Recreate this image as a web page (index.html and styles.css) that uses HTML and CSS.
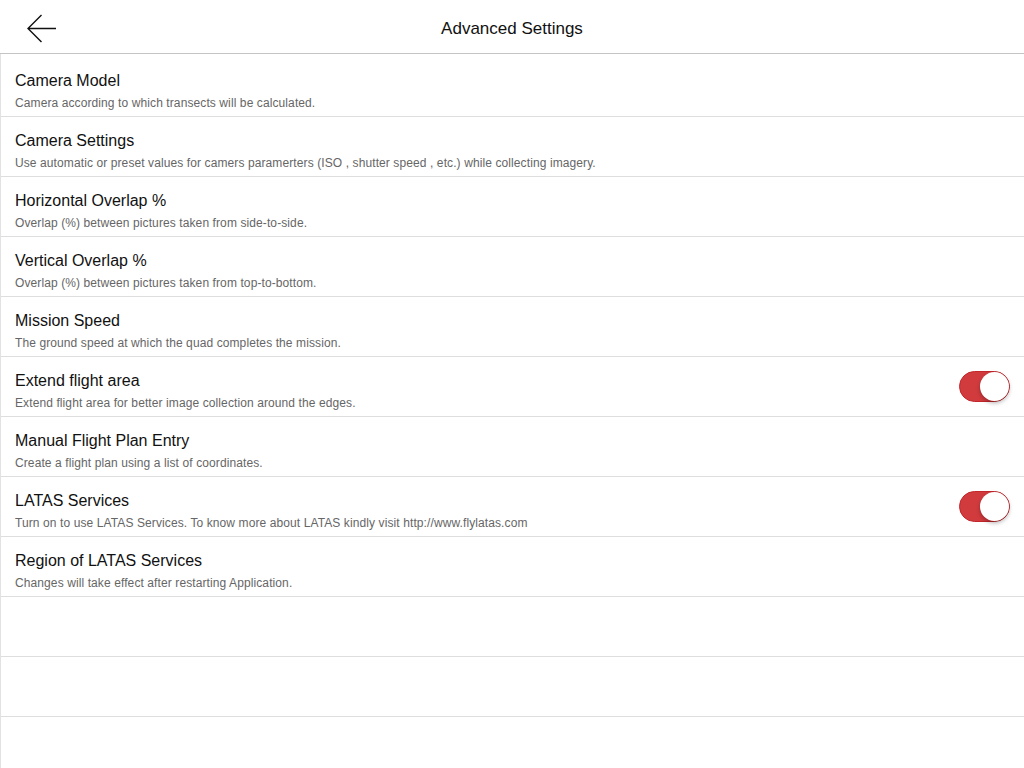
FILE: index.html
```html
<!DOCTYPE html>
<html>
<head>
<meta charset="utf-8">
<link rel="stylesheet" href="styles.css">
</head>
<body>
<div class="header">
  <button class="back" aria-label="Back">
    <svg width="32" height="30" viewBox="0 0 32 30"><path d="M30 14.5H2M15.5 1L2 14.5L15.5 28" fill="none" stroke="#111" stroke-width="1.4"/></svg>
  </button>
  <div class="title">Advanced Settings</div>
</div>
<div class="list">
  <div class="row"><div class="text"><div class="t">Camera Model</div><div class="s">Camera according to which transects will be calculated.</div></div></div>
  <div class="row"><div class="text"><div class="t">Camera Settings</div><div class="s">Use automatic or preset values for camers paramerters (ISO , shutter speed , etc.) while collecting imagery.</div></div></div>
  <div class="row"><div class="text"><div class="t">Horizontal Overlap %</div><div class="s">Overlap (%) between pictures taken from side-to-side.</div></div></div>
  <div class="row"><div class="text"><div class="t">Vertical Overlap %</div><div class="s">Overlap (%) between pictures taken from top-to-bottom.</div></div></div>
  <div class="row"><div class="text"><div class="t">Mission Speed</div><div class="s">The ground speed at which the quad completes the mission.</div></div></div>
  <div class="row"><div class="text"><div class="t">Extend flight area</div><div class="s">Extend flight area for better image collection around the edges.</div></div><div class="toggle on"><div class="knob"></div></div></div>
  <div class="row"><div class="text"><div class="t">Manual Flight Plan Entry</div><div class="s">Create a flight plan using a list of coordinates.</div></div></div>
  <div class="row"><div class="text"><div class="t">LATAS Services</div><div class="s">Turn on to use LATAS Services. To know more about LATAS kindly visit http://www.flylatas.com</div></div><div class="toggle on"><div class="knob"></div></div></div>
  <div class="row"><div class="text"><div class="t">Region of LATAS Services</div><div class="s">Changes will take effect after restarting Application.</div></div></div>
  <div class="row empty"></div>
  <div class="row empty"></div>
  <div class="row empty last"></div>
</div>
</body>
</html>
```
FILE: styles.css
```css
html, body {
  margin: 0;
  padding: 0;
  background: #fff;
  font-family: "Liberation Sans", Arial, sans-serif;
  color: #111;
}
body {
  width: 1024px;
  height: 768px;
  overflow: hidden;
}
.header {
  height: 53px;
  border-bottom: 1px solid #c4c4c4;
  display: flex;
  align-items: center;
  justify-content: center;
  position: relative;
}
.back {
  position: absolute;
  left: 26px;
  top: 14px;
  border: 0;
  background: none;
  padding: 0;
  width: 32px;
  height: 30px;
}
.back svg { display: block; }
.title {
  font-size: 17px;
  color: #111;
  padding-top: 4px;
}
.list {
  border-left: 1px solid #e2e2e2;
  padding-top: 3px;
}
.row {
  height: 59px;
  border-bottom: 1px solid #dedede;
  display: flex;
  align-items: center;
  padding: 0 14px 0 14px;
  box-sizing: content-box;
}
.text {
  flex: 1;
  align-self: flex-start;
  padding-top: 14px;
}
.t {
  font-size: 16px;
  line-height: 20px;
  color: #111;
}
.s {
  font-size: 12px;
  line-height: 16px;
  color: #666;
  padding-top: 4px;
  letter-spacing: 0.1px;
}
.toggle {
  width: 51px;
  height: 31px;
  border-radius: 16px;
  background: #d23b3e;
  position: relative;
  box-sizing: border-box;
  border: 1px solid #c2272b;
}
.knob {
  position: absolute;
  right: 0;
  top: 0;
  width: 29px;
  height: 29px;
  border-radius: 50%;
  background: #fff;
  box-shadow: 0 2px 4px rgba(0,0,0,0.3);
}
.row.last {
  height: 52px;
  border-bottom: 0;
}
```
